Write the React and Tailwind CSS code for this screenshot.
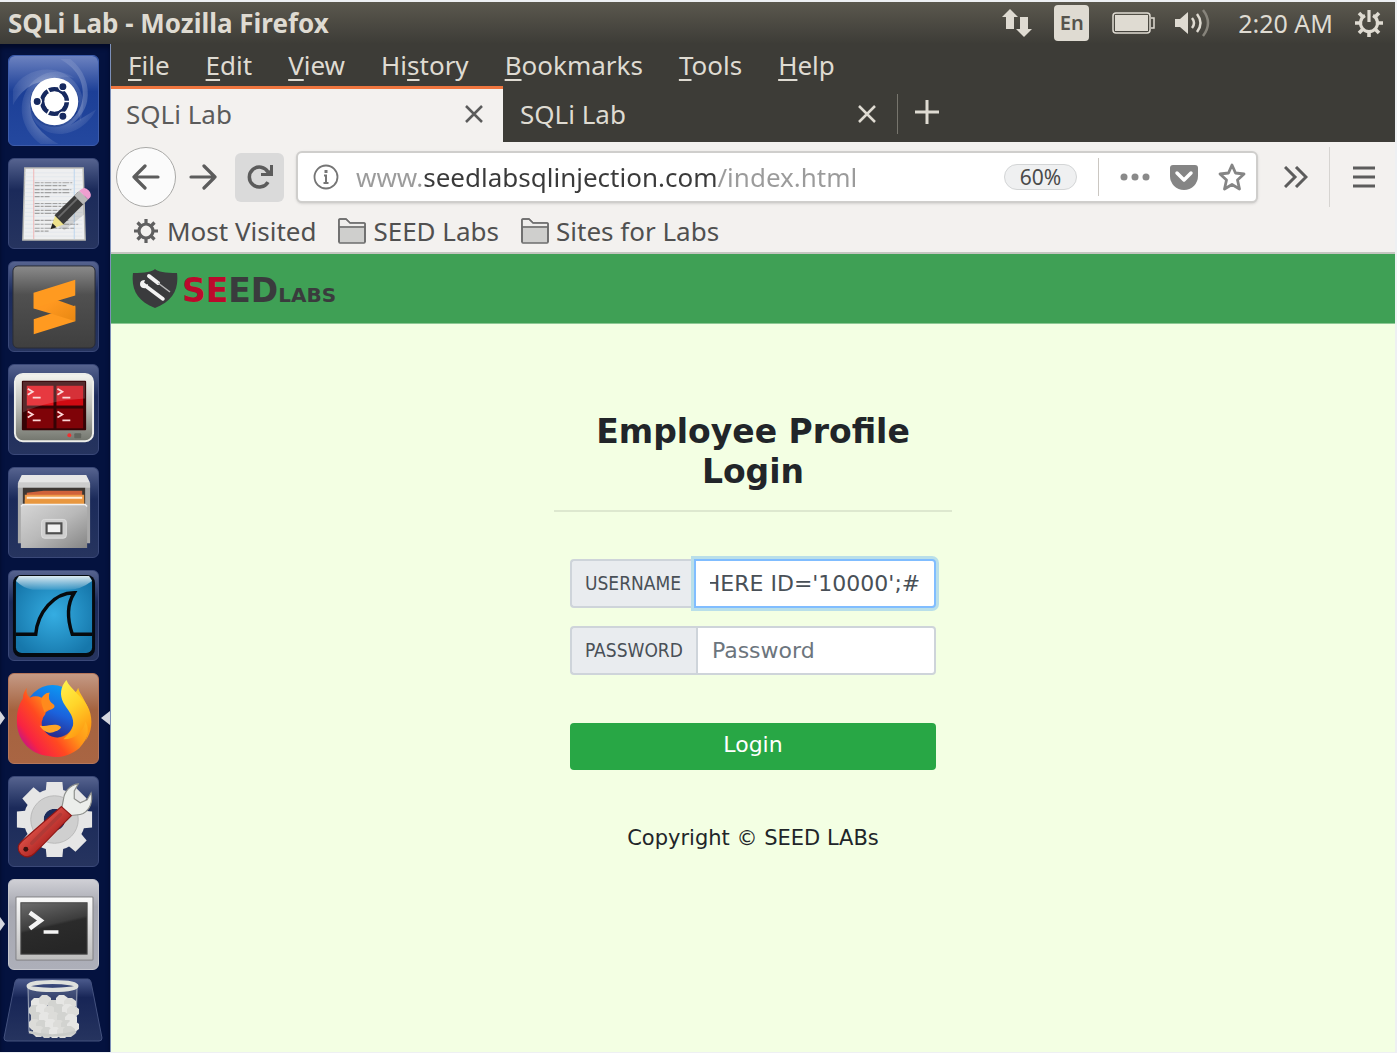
import { useEffect, useRef } from "react";

/* ---------- Launcher icons ---------- */

function UbuntuIcon() {
  return (
    <svg viewBox="0 0 90 90" className="size-full">
      <defs>
        <linearGradient id="dash" x1="0" y1="0" x2="0" y2="1">
          <stop offset="0" stopColor="#6c82c0" />
          <stop offset="0.4" stopColor="#1c3f97" />
          <stop offset="1" stopColor="#24489f" />
        </linearGradient>
        <radialGradient id="swirl">
          <stop offset="0" stopColor="#fff" stopOpacity="0.5" />
          <stop offset="1" stopColor="#fff" stopOpacity="0.08" />
        </radialGradient>
      </defs>
      <rect width="90" height="90" rx="6" fill="url(#dash)" />
      <path d="M4 34C12 16 38 8 56 18C72 27 80 44 72 66C68 44 54 26 36 26C22 26 10 38 4 50Z" fill="url(#swirl)" />
      <path d="M32 89C14 76 8 54 17 36C24 20 46 8 66 22C44 18 24 32 22 50C20 66 34 80 50 89Z" fill="url(#swirl)" />
      <path d="M88 54C78 74 56 84 38 76C26 70 18 58 22 42C24 60 42 72 58 66C74 60 78 40 72 24C68 14 60 8 52 3H62C76 14 82 30 79 46C77 56 70 64 62 70Z" fill="url(#swirl)" />
      <circle cx="46" cy="47" r="25" fill="#0b2a75" opacity="0.35" />
      <circle cx="46" cy="46" r="24" fill="#fff" />
      <circle cx="46" cy="46" r="12.5" fill="none" stroke="#16295f" strokeWidth="4.5" />
      <g stroke="#fff" strokeWidth="1.6">
        <path d="M46 46H64M46 46L37 30M46 46L37 62" />
      </g>
      <circle cx="46" cy="46" r="9.8" fill="#fff" />
      <g fill="#16295f" stroke="#fff" strokeWidth="1.4">
        <circle cx="28.500" cy="46" r="4.200" />
        <circle cx="54.500" cy="31" r="4.200" />
        <circle cx="54.500" cy="61" r="4.200" />
      </g>
    </svg>
  );
}

function EditorIcon() {
  return (
    <svg viewBox="0 0 90 90" className="size-full">
      <path d="M16 9H75L77 82H14Z" fill="#eeeff0" stroke="#b9b9b4" strokeWidth="1.5" />
      <g stroke="#dde3ea" strokeWidth="0.7">
        <path d="M16 14H74M16 18H74M16 22H74M16 26H74M16 30H74M16 34H74M16 38H74M16 42H74M16 46H74M16 50H74M16 54H74M16 58H74M16 62H74M16 66H74M16 70H74M16 74H74M16 78H74" />
      </g>
      <path d="M25 10V81" stroke="#f0b6b6" strokeWidth="1" />
      <path d="M66 10V81" stroke="#bcd6ee" strokeWidth="1" />
      <g stroke="#a2a2a2" strokeWidth="1.2" strokeDasharray="5 1 3 1 7 1">
        <path d="M26 24H64M26 27H58M26 31H63M26 34H62M26 38H41M26 45H62M26 48H63M26 52H60M26 55H60M26 62H60M26 66H70M26 70H66M26 73H40" />
      </g>
      <path d="M50 68L76 44L76 56L56 72Z" fill="#000" opacity="0.12" />
      <path d="M42 71L47 56L56 66Z" fill="#eee28b" />
      <path d="M42 71L44 65L48 69Z" fill="#222" />
      <path d="M46 57L70 33L79 42L55 66Z" fill="#3b3b3b" />
      <path d="M50 59L73 36" stroke="#6a6a6a" strokeWidth="2" />
      <path d="M66 37L71 32L80 41L75 46Z" fill="#b9b9b9" />
      <path d="M71 32L74 30Q77 28 81 32Q84 36 82 39L80 41Z" fill="#ee9fd0" />
    </svg>
  );
}

function SublimeIcon() {
  return (
    <svg viewBox="0 0 90 90" className="size-full">
      <defs>
        <linearGradient id="subl" x1="0" y1="0" x2="0" y2="1">
          <stop offset="0" stopColor="#8b8b8b" />
          <stop offset="0.35" stopColor="#505050" />
          <stop offset="1" stopColor="#3f3f3f" />
        </linearGradient>
        <linearGradient id="sublBand" x1="0" y1="0" x2="1" y2="1">
          <stop offset="0.4" stopColor="#ff9820" />
          <stop offset="1" stopColor="#e88812" />
        </linearGradient>
      </defs>
      <rect x="4" y="4" width="83" height="83" rx="5" fill="url(#subl)" stroke="#2a2d36" />
      <path d="M25 58L67 44V60L25 73Z" fill="#ff9a20" />
      <path d="M25 31L50 39L67 45V60L42 52L25 47Z" fill="url(#sublBand)" />
      <path d="M25 31L67 18V34L50 39L25 47Z" fill="#ff9a20" />
    </svg>
  );
}

function TerminatorIcon() {
  const panes = [
    [18, 21, "#e3141c"],
    [48, 21, "#cf0a12"],
    [18, 44, "#7f0308"],
    [48, 44, "#7f0308"],
  ];
  return (
    <svg viewBox="0 0 90 90" className="size-full">
      <defs>
        <linearGradient id="crt" x1="0" y1="0" x2="0" y2="1">
          <stop offset="0" stopColor="#f3f4f0" />
          <stop offset="0.5" stopColor="#b9bbb5" />
          <stop offset="1" stopColor="#73766e" />
        </linearGradient>
      </defs>
      <rect x="6" y="9" width="79" height="68" rx="8" fill="url(#crt)" stroke="#ecede9" strokeWidth="2" />
      <rect x="13" y="16" width="65" height="50" rx="1" fill="#360305" />
      {panes.map(([x, y, c]) => (
        <g key={`${x}-${y}`}>
          <rect x={x} y={y} width="27" height="20" fill={c} />
          <path d={`M${x + 1} ${y + 3}l5 3l-5 3M${x + 6} ${y + 12}h8`} fill="none" stroke="#fbd5d5" strokeWidth="1.8" />
        </g>
      ))}
      <path d="M14 17H77V34Q40 36 14 48Z" fill="#fff" opacity="0.16" />
      <circle cx="61" cy="71" r="2" fill="#f03030" />
      <rect x="66" y="69" width="7" height="5" rx="1" fill="#62655e" />
    </svg>
  );
}

function FilesIcon() {
  return (
    <svg viewBox="0 0 90 90" className="size-full">
      <defs>
        <linearGradient id="cab" x1="0" y1="0" x2="1" y2="1">
          <stop offset="0" stopColor="#d6d6d6" />
          <stop offset="0.5" stopColor="#b9b9b9" />
          <stop offset="1" stopColor="#858585" />
        </linearGradient>
      </defs>
      <path d="M13 7H78L82 18V76H9V18Z" fill="#a9a9a9" />
      <path d="M13 7H78L82 15H9Z" fill="#e6e6e6" />
      <path d="M9 15H82V20H9Z" fill="#cdcdcd" />
      <rect x="14" y="20" width="63" height="18" fill="#3d3733" />
      <path d="M18 25L35 23H74V37H18Z" fill="#d0623a" />
      <path d="M16 27H76V37H16Z" fill="#f09a48" />
      <path d="M18 30H74" stroke="#fff0dc" strokeWidth="2" />
      <path d="M16 32H76V38H16Z" fill="#e8973f" />
      <path d="M14 37H77L79 40V81H12V40Z" fill="url(#cab)" />
      <path d="M12 39L14 37H77L79 39" fill="none" stroke="#f1f1f1" strokeWidth="1.5" />
      <rect x="33" y="52" width="25" height="19" rx="3" fill="#cfcfcf" stroke="#dedede" />
      <rect x="38" y="56" width="15" height="10" fill="#f2f2f2" stroke="#4f4f4f" strokeWidth="2.2" />
    </svg>
  );
}

function WiresharkIcon() {
  return (
    <svg viewBox="0 0 90 90" className="size-full">
      <defs>
        <radialGradient id="sea" cx="0.5" cy="0.5" r="0.6">
          <stop offset="0" stopColor="#35ade2" />
          <stop offset="1" stopColor="#1677ab" />
        </radialGradient>
        <linearGradient id="seaGlare" x1="0" y1="0" x2="0" y2="1">
          <stop offset="0" stopColor="#fff" stopOpacity="0.85" />
          <stop offset="1" stopColor="#fff" stopOpacity="0.1" />
        </linearGradient>
      </defs>
      <rect x="4" y="4" width="83" height="83" rx="8" fill="#050a10" />
      <rect x="7" y="5" width="77" height="78" rx="6" fill="url(#sea)" />
      <path d="M10 5H81L84 10Q72 19 60 19H24Q14 17 7 10Z" fill="url(#seaGlare)" />
      <path d="M7 64H27C29 42 45 22 66 22C57 36 60 52 64 64H84" fill="none" stroke="#06090c" strokeWidth="3.5" />
    </svg>
  );
}

function FirefoxIcon() {
  return (
    <svg viewBox="0 0 90 90" className="size-full">
      <defs>
        <linearGradient id="foxGlobe" x1="0.7" y1="0" x2="0.3" y2="1">
          <stop offset="0" stopColor="#0a9cf5" />
          <stop offset="0.5" stopColor="#1b62dc" />
          <stop offset="1" stopColor="#2c1c79" />
        </linearGradient>
        <linearGradient id="foxBody" x1="0.9" y1="0.2" x2="0.05" y2="0.8">
          <stop offset="0" stopColor="#ffc420" />
          <stop offset="0.35" stopColor="#ff9518" />
          <stop offset="0.6" stopColor="#ff4a20" />
          <stop offset="0.85" stopColor="#f82343" />
          <stop offset="1" stopColor="#c0168a" />
        </linearGradient>
        <linearGradient id="foxTail" x1="0" y1="0" x2="0.4" y2="1">
          <stop offset="0" stopColor="#fff44f" />
          <stop offset="0.5" stopColor="#ffd52a" />
          <stop offset="1" stopColor="#ff9a12" />
        </linearGradient>
      </defs>
      <circle cx="44" cy="38" r="27" fill="url(#foxGlobe)" />
      <path
        d="M18 14C17 19 19 22 21 24C25 22 29 22 33 24C35 21 38 19 41 19C40 22 40 24 41 27C43 30 46 30 46 33C45 36 39 36 37 39C37 42 34 43 34 46C32 49 33 55 38 60C44 66 56 66 61 59C67 52 67 42 62 34C58 28 54 26 54 16C58 22 66 24 70 14C71 20 77 25 81 38C84 53 80 66 71 75C62 82 51 86 40 83C20 81 7 65 8 46C8 36 11 29 14 25C14 20 16 17 18 14Z"
        fill="url(#foxBody)"
      />
      <path
        d="M58 6C52 13 51 21 55 29C59 36 65 41 65 50C65 57 60 61 55 66C68 66 76 57 77 48C81 54 80 61 77 68C84 59 85 47 81 36C78 28 72 24 68 19C64 14 60 11 58 6Z"
        fill="url(#foxTail)"
      />
      <path d="M31 52C39 54 45 49 52 53C54 54 50 57 47 58C42 61 35 59 31 52Z" fill="#ffa526" />
      <path d="M34 24C36 21 38 19 41 19C39 23 40 28 46 32C43 36 38 35 36 39C34 33 31 27 34 24Z" fill="#ff8a1c" />
    </svg>
  );
}

function SettingsIcon() {
  const teeth = [0, 45, 90, 135, 180, 225, 270, 315];
  return (
    <svg viewBox="0 0 90 90" className="size-full">
      <defs>
        <linearGradient id="redGrip" x1="0" y1="0" x2="1" y2="1">
          <stop offset="0.3" stopColor="#e2564d" />
          <stop offset="0.7" stopColor="#a81f1d" />
        </linearGradient>
      </defs>
      <g fill="#e6e6e6">
        {teeth.map((a) => (
          <path key={a} d="M37 16L38 5H54L55 16Z" transform={`rotate(${a} 46 43)`} />
        ))}
      </g>
      <circle cx="46" cy="43" r="21" fill="none" stroke="#e6e6e6" strokeWidth="20" />
      <circle cx="46" cy="43" r="17.500" fill="none" stroke="#cfcfcf" strokeWidth="13" />
      <circle cx="46" cy="43" r="24" fill="none" stroke="#b9b9b9" strokeWidth="1" />
      <path d="M53 33L55 23C56 14 62 8 70 7L66 14V22L72 26L79 23L83 16C85 25 82 33 75 37C71 39 67 38 63 39L59 43Z" fill="#eceeeb" stroke="#8f918d" strokeWidth="1.2" />
      <path d="M53 30L63 39L26 77Q19 84 12 78Q6 71 13 65Z" fill="url(#redGrip)" stroke="#8f1715" strokeWidth="1.2" />
      <path d="M52 38L23 67" stroke="#b03a36" strokeWidth="3.5" strokeLinecap="round" />
      <circle cx="17" cy="73" r="2.500" fill="#3c1210" />
    </svg>
  );
}

function TerminalIcon() {
  return (
    <svg viewBox="0 0 90 90" className="size-full">
      <defs>
        <linearGradient id="scr" x1="0" y1="0" x2="0.3" y2="1">
          <stop offset="0" stopColor="#6c6c6c" />
          <stop offset="0.5" stopColor="#3d3d3d" />
          <stop offset="0.55" stopColor="#2b2b2b" />
          <stop offset="1" stopColor="#262626" />
        </linearGradient>
        <linearGradient id="bez" x1="0" y1="0" x2="0" y2="1">
          <stop offset="0" stopColor="#fafafa" />
          <stop offset="1" stopColor="#bdbdbd" />
        </linearGradient>
      </defs>
      <rect x="7" y="17" width="78" height="64" rx="1" fill="url(#bez)" stroke="#8c8c90" strokeWidth="1.3" />
      <rect x="12" y="23" width="67" height="52" fill="url(#scr)" stroke="#4a4a4a" />
      <path d="M21 33L32 41L21 49" fill="none" stroke="#f4f4f4" strokeWidth="4.5" />
      <path d="M35 52.500H50" stroke="#f4f4f4" strokeWidth="3.500" />
    </svg>
  );
}

function TrashIcon() {
  const balls = [
    [33, 25], [41, 22], [50, 27], [58, 22], [66, 25], [31, 32], [38, 31], [46, 33], [56, 31], [64, 31], [69, 33],
    [33, 39], [41, 39], [50, 39], [59, 39], [67, 41], [31, 46], [38, 47], [47, 46], [55, 47], [63, 47], [69, 48],
    [35, 53], [43, 54], [51, 54], [59, 54], [65, 53],
  ];
  return (
    <svg viewBox="0 0 100 64" className="block w-[100px]">
      <defs>
        <linearGradient id="glass" x1="0" y1="0" x2="0" y2="1">
          <stop offset="0" stopColor="#4b5a8c" />
          <stop offset="0.3" stopColor="#172556" />
          <stop offset="1" stopColor="#26345f" />
        </linearGradient>
      </defs>
      <path d="M15 1H85Q87 1 88 4L99 60Q99 63 96 63H4Q1 63 1 60L12 4Q13 1 15 1Z" fill="url(#glass)" stroke="#44527f" />
      <path d="M25 9L26 54Q50 61 73 54L74 9" fill="#8791a8" fillOpacity="0.3" stroke="#9da6ba" strokeWidth="1" />
      {balls.map(([x, y], i) => (
        <path
          key={i}
          d={`M${x - 5} ${y - 2}l3 -3l5 0l4 3l0 5l-4 3l-5 0l-3 -3z`}
          fill={i % 3 === 0 ? "#e6e6e4" : i % 3 === 1 ? "#dcdcd9" : "#d2d3d0"}
        />
      ))}
      <ellipse cx="49.500" cy="8" rx="24" ry="4" fill="none" stroke="#dfe1dd" strokeWidth="4" />
      <path d="M26 54Q49 61 73 54" fill="none" stroke="#c9cbc8" strokeWidth="2.5" />
    </svg>
  );
}

const glassTile = "bg-linear-to-b from-[#56638f] via-[#1b2a5a] via-35% to-[#26345f] border-[#3a4878]";

const launcher = [
  { label: "Dash", Icon: UbuntuIcon, tile: "bg-[#24489f] border-[#3d5cab]" },
  { label: "Text Editor", Icon: EditorIcon, tile: glassTile },
  { label: "Sublime Text", Icon: SublimeIcon, tile: glassTile },
  { label: "Terminator", Icon: TerminatorIcon, tile: glassTile },
  { label: "Files", Icon: FilesIcon, tile: glassTile },
  { label: "Wireshark", Icon: WiresharkIcon, tile: glassTile },
  {
    label: "Firefox",
    Icon: FirefoxIcon,
    running: true,
    active: true,
    tile: "bg-linear-to-b from-[#c49a85] via-[#a5633f] via-40% to-[#a96543] border-[#b5765a]",
  },
  { label: "System Settings", Icon: SettingsIcon, tile: glassTile },
  {
    label: "Terminal",
    Icon: TerminalIcon,
    running: true,
    tile: "bg-linear-to-b from-[#cfcfd5] via-[#a6a7b0] via-30% to-[#adafb9] border-[#c5c6cd]",
  },
];

function Launcher() {
  return (
    <nav
      aria-label="Launcher"
      className="flex w-[111px] shrink-0 flex-col items-center gap-3 border-r border-[#7c8fb8] bg-[#04123f] pt-[11px] shadow-[inset_0_4px_4px_#020a28]"
    >
      {launcher.map(({ label, Icon, tile, running, active }) => (
        <div key={label} className="relative flex w-full justify-center pr-1">
          {running && (
            <span className="absolute top-[38px] left-0 border-y-[7px] border-l-[5px] border-y-transparent border-l-[#d5d7df]" />
          )}
          <button aria-label={label} className={`size-[91px] overflow-hidden rounded-md border ${tile}`}>
            <Icon />
          </button>
          {active && (
            <span className="absolute top-[38px] right-0 border-y-[7px] border-r-[9px] border-y-transparent border-r-[#d5d7df]" />
          )}
        </div>
      ))}
      <button aria-label="Trash" className="-mt-1 pr-1">
        <TrashIcon />
      </button>
    </nav>
  );
}

/* ---------- System panel ---------- */

function TopPanel() {
  return (
    <header className="flex h-[42px] items-center bg-linear-to-b from-[#5b584e] to-[#3d3c37] pr-3 pl-2 text-[#dfdbd2]">
      <h1 className="flex-1 text-[26px] leading-none font-bold">SQLi Lab - Mozilla Firefox</h1>
      <div className="flex items-center">
        <svg viewBox="0 0 30 30" className="mr-[22px] size-[30px]" fill="#dfdbd2" aria-label="Network">
          <path d="M8 1L16 9H12V21H4V9H0ZM18 9H26V21H30L22 29L14 21H18Z" />
        </svg>
        <span className="mr-[23px] flex h-[36px] w-[35px] items-center justify-center rounded-sm bg-[#dfdbd2] text-[20px] font-semibold text-[#55534c]">
          En
        </span>
        <svg viewBox="0 0 43 22" className="mr-[20px] h-[22px] w-[43px]" aria-label="Battery">
          <rect x="1" y="1" width="37" height="20" rx="3" fill="none" stroke="#dfdbd2" strokeWidth="1.500" />
          <rect x="3" y="3" width="33" height="16" fill="#dfdbd2" />
          <path d="M39 6H42V16H39" fill="none" stroke="#dfdbd2" strokeWidth="1.500" />
        </svg>
        <svg viewBox="0 0 35 30" className="mr-[28px] h-[30px] w-[35px]" fill="none" strokeWidth="2.500" aria-label="Volume">
          <path d="M0 11H5L13 4V26L5 19H0Z" fill="#dfdbd2" />
          <path d="M17 10Q21 15 17 20" stroke="#dfdbd2" />
          <path d="M22 6Q29 15 22 24" stroke="#dfdbd2" />
          <path d="M28 2Q38 15 28 28" stroke="#87847b" />
        </svg>
        <time className="mr-[22px] text-[25px] leading-none">2:20 AM</time>
        <svg viewBox="0 0 28 28" className="size-[28px]" fill="none" stroke="#dfdbd2" aria-label="Session">
          <path d="M10 6.500A8.500 8.500 0 1 0 18 6.500" strokeWidth="3.200" />
          <path d="M14 1V13" strokeWidth="3.200" />
          <path d="M0 14H5M23 14H28M14 23V28M4 4L8 8M24 4L20 8M4 24L8 20M24 24L20 20" strokeWidth="3.600" />
        </svg>
      </div>
    </header>
  );
}

/* ---------- Browser chrome ---------- */

const menus = [
  ["", "F", "ile"],
  ["", "E", "dit"],
  ["", "V", "iew"],
  ["Hi", "s", "tory"],
  ["", "B", "ookmarks"],
  ["", "T", "ools"],
  ["", "H", "elp"],
];

function MenuBar() {
  return (
    <div role="menubar" className="flex h-[42px] items-center gap-9 pb-px pl-[17px] text-[26px] leading-none text-[#dfdbd2]">
      {menus.map(([pre, key, post]) => (
        <button key={key + post} role="menuitem">
          {pre}
          <span className="underline decoration-2 underline-offset-4">{key}</span>
          {post}
        </button>
      ))}
    </div>
  );
}

function Close() {
  return (
    <svg viewBox="0 0 18 18" className="size-[18px]" stroke="currentColor" strokeWidth="2.500" fill="none">
      <path d="M1 1L17 17M17 1L1 17" />
    </svg>
  );
}

function Tabs() {
  return (
    <div className="flex h-[56px] items-stretch text-[26px] leading-none">
      <div className="flex w-[392px] items-center justify-between border-t-[3px] border-[#f0763f] bg-[#f3f1ef] pr-5 pb-1 pl-[15px] text-[#5b5b5b]">
        <button>SQLi Lab</button>
        <button aria-label="Close tab">
          <Close />
        </button>
      </div>
      <div className="flex w-[394px] items-center justify-between border-t-[3px] border-transparent pr-[21px] pb-1 pl-[17px] text-[#dfdbd2]">
        <button>SQLi Lab</button>
        <button aria-label="Close tab">
          <Close />
        </button>
      </div>
      <div className="my-2 border-l border-[#77756d]" />
      <button aria-label="New tab" className="pb-1 pl-4 text-[#dfdbd2]">
        <svg viewBox="0 0 26 26" className="size-[26px]" stroke="currentColor" strokeWidth="3" fill="none">
          <path d="M13 1V25M1 13H25" />
        </svg>
      </button>
    </div>
  );
}

function Toolbar() {
  return (
    <div className="flex h-[68px] items-center bg-[#f3f1ef] pt-[2px] pr-5 pl-[5px] text-[#5c5c5c]">
      <button
        aria-label="Back"
        className="flex size-[60px] shrink-0 items-center justify-center rounded-full border border-[#a9a9a7] bg-[#fbfbfb]"
      >
        <svg viewBox="0 0 28 28" className="size-[28px]" fill="none" stroke="currentColor" strokeWidth="3.200" strokeLinecap="round" strokeLinejoin="round">
          <path d="M26 14H2M13 3L2 14L13 25" />
        </svg>
      </button>
      <button aria-label="Forward" className="ml-[13px]">
        <svg viewBox="0 0 28 28" className="size-[28px]" fill="none" stroke="currentColor" strokeWidth="3.200" strokeLinecap="round" strokeLinejoin="round">
          <path d="M2 14H26M15 3L26 14L15 25" />
        </svg>
      </button>
      <button aria-label="Reload" className="ml-[18px] flex size-[49px] shrink-0 items-center justify-center rounded-md bg-[#dadada]">
        <svg viewBox="0 0 28 28" className="size-[28px]" fill="none" stroke="currentColor" strokeWidth="3.500">
          <path d="M22 19A10 10 0 1 1 22 9" />
          <path d="M24 2H27V13H15V10H20L24 7Z" fill="currentColor" stroke="none" />
        </svg>
      </button>
      <div className="ml-3 flex h-[52px] flex-1 items-center rounded-md border-2 border-[#cfcecc] bg-white pr-2 pl-[15px] shadow-sm">
        <svg viewBox="0 0 26 26" className="size-[26px] shrink-0" fill="none" stroke="#757575" strokeWidth="1.800" aria-label="Site information">
          <circle cx="13" cy="13" r="11.500" />
          <path d="M11 11.500H13V18M10.500 19H15.500" strokeWidth="2" />
          <path d="M13 6V9" strokeWidth="3" />
        </svg>
        <input
          aria-label="Address"
          type="text"
          defaultValue="www.seedlabsqlinjection.com/index.html"
          className="ml-[17px] h-10 min-w-0 flex-1 bg-[linear-gradient(90deg,#9b9b9b_67px,#3a3a3a_67px,#3a3a3a_361px,#9b9b9b_361px)] bg-clip-text text-[26px] leading-none text-transparent outline-none"
        />
        <button className="mr-[21px] h-[26px] w-[73px] rounded-full border border-[#d3d5d6] bg-[#eff0f1] text-[21px] leading-none text-[#4a4a4a]">
          60%
        </button>
        <div className="mr-[21px] h-[38px] border-l border-[#cbc7c2]" />
        <button aria-label="Page actions" className="mr-5">
          <svg viewBox="0 0 30 8" className="h-2 w-[30px]" fill="#8a8a8a">
            <circle cx="4" cy="4" r="3.500" />
            <circle cx="15" cy="4" r="3.500" />
            <circle cx="26" cy="4" r="3.500" />
          </svg>
        </button>
        <button aria-label="Save to Pocket" className="mr-5">
          <svg viewBox="0 0 28 25" className="h-[25px] w-[28px]">
            <path d="M3 0H25Q28 0 28 3V11A14 14 0 0 1 0 11V3Q0 0 3 0Z" fill="#858585" />
            <path d="M7 8L14 15L21 8" fill="none" stroke="#fff" strokeWidth="3.500" strokeLinecap="round" strokeLinejoin="round" />
          </svg>
        </button>
        <button aria-label="Bookmark this page" className="mr-[2px]">
          <svg viewBox="0 0 28 28" className="size-[28px]" fill="none" stroke="#858585" strokeWidth="2.800" strokeLinejoin="round">
            <path d="M14 2L17.500 10L26 11L19.500 17L21.500 26L14 21.500L6.500 26L8.500 17L2 11L10.500 10Z" />
          </svg>
        </button>
      </div>
      <button aria-label="More tools" className="ml-[26px]">
        <svg viewBox="0 0 24 22" className="h-[22px] w-[24px]" fill="none" stroke="currentColor" strokeWidth="3">
          <path d="M1 1L11 11L1 21M12 1L22 11L12 21" />
        </svg>
      </button>
      <div className="ml-[21px] h-[60px] border-l border-[#d6d4d1]" />
      <button aria-label="Open menu" className="ml-[23px]">
        <svg viewBox="0 0 22 22" className="size-[22px]" stroke="currentColor" strokeWidth="3">
          <path d="M0 2H22M0 11H22M0 20H22" />
        </svg>
      </button>
    </div>
  );
}

function Folder() {
  return (
    <svg viewBox="0 0 28 26" className="h-[26px] w-[28px]" stroke="#6d6d6d" strokeWidth="1.600" strokeLinejoin="round">
      <path d="M1 24V2Q1 1 2 1H8L12 5H26Q27 5 27 6V24Q27 25 26 25H2Q1 25 1 24Z" fill="#cfcfcd" />
      <path d="M1.500 2H8L12 5.500H26.500V8H1.500Z" fill="#efeeec" stroke="none" />
      <path d="M1 9H27" fill="none" />
      <path d="M1 24V2Q1 1 2 1H8L12 5H26Q27 5 27 6V24" fill="none" />
    </svg>
  );
}

function BookmarksBar() {
  return (
    <div className="flex h-[44px] items-center gap-[22px] border-b-2 border-[#c4c6c0] bg-[#f3f1ef] pl-[22px] text-[26px] leading-none text-[#505050]">
      <button className="flex items-center gap-2">
        <svg viewBox="0 0 26 26" className="size-[26px]" fill="none" stroke="#5f5f5f" strokeWidth="3.200">
          <circle cx="13" cy="13" r="7" />
          <path d="M13 1V6M13 20V25M1 13H6M20 13H25M4.500 4.500L8 8M21.500 4.500L18 8M4.500 21.500L8 18M21.500 21.500L18 18" />
        </svg>
        Most Visited
      </button>
      <button className="flex items-center gap-[7px]">
        <Folder />
        SEED Labs
      </button>
      <button className="flex items-center gap-[7px]">
        <Folder />
        Sites for Labs
      </button>
    </div>
  );
}

/* ---------- Web page ---------- */

function SeedLogo() {
  return (
    <a href="#home" className="flex items-center gap-1">
      <svg viewBox="0 0 46 39" className="h-[39px] w-[46px]">
        <path d="M23 0Q27 4 45 4C47 20 41 32 23 39C5 32 -1 20 1 4Q19 4 23 0Z" fill="#3a3b3d" />
        <path d="M11 15L31 30" stroke="#f3f3f3" strokeWidth="3.500" strokeLinecap="round" />
        <path d="M8 15Q8 11 13 11L12 14L14 16L16 15Q16 20 11 19Q8 18 8 15Z" fill="#f3f3f3" />
        <path d="M17 7L26 14" stroke="#f3f3f3" strokeWidth="4" strokeLinecap="round" />
        <path d="M26 14L38 23" stroke="#b9b9b9" strokeWidth="1.500" />
      </svg>
      <span className="flex items-baseline pt-1 font-['DejaVu_Sans',sans-serif] leading-none font-bold text-[#3a3b3d]">
        <span className="text-[33px]">
          <span className="text-[#bb0a2c]">SE</span>ED
        </span>
        <span className="text-[20px]">LABS</span>
      </span>
    </a>
  );
}

const addon =
  "flex items-center rounded-l-sm border-2 border-r-0 border-[#ced4da] bg-[#e9ecef] px-[13px] font-['DejaVu_Sans_Condensed','DejaVu_Sans',sans-serif] text-[19px] text-[#495057]";

function LoginPage() {
  const username = useRef(null);

  useEffect(() => {
    username.current.scrollLeft = username.current.scrollWidth;
  }, []);

  return (
    <div className="flex flex-1 flex-col bg-[#f3ffe3] font-['DejaVu_Sans',sans-serif] text-[#212529]">
      <div className="flex h-[70px] items-center border-b border-[#8cc894] bg-[#3fa055] pl-[21px]">
        <SeedLogo />
      </div>
      <main className="mx-auto flex w-[398px] flex-col pt-[88px]">
        <h2 className="border-b-2 border-[#dde8cf] pb-[18px] text-center text-[33px] leading-[40px] font-bold">
          Employee Profile Login
        </h2>
        <form className="flex flex-col px-4 pt-[47px]" onSubmit={(e) => e.preventDefault()}>
          <div className="flex h-[49px]">
            <label htmlFor="username" className={addon}>
              USERNAME
            </label>
            <input
              id="username"
              ref={username}
              type="text"
              defaultValue="WHERE ID='10000';#"
              className="min-w-0 flex-1 rounded-r-sm border-2 border-[#80bdff] bg-white px-[14px] text-[22px] text-[#495057] ring-3 ring-[#b9dfe9] outline-none"
            />
          </div>
          <div className="mt-[18px] flex h-[49px]">
            <label htmlFor="password" className={addon}>
              PASSWORD
            </label>
            <input
              id="password"
              type="password"
              placeholder="Password"
              className="min-w-0 flex-1 rounded-r-sm border-2 border-[#ced4da] bg-white px-[14px] text-[22px] text-[#495057] outline-none placeholder:text-[#6c757d]"
            />
          </div>
          <button type="submit" className="mt-[48px] h-[47px] rounded-sm bg-[#28a745] pb-1 text-[22px] leading-none text-white">
            Login
          </button>
        </form>
        <p className="pt-[52px] text-center text-[21px] leading-[32px]">Copyright © SEED LABs</p>
      </main>
    </div>
  );
}

export default function App() {
  return (
    <div className="flex min-h-screen flex-col border-t-2 border-r-2 border-b border-[#eef0f3] bg-[#3d3c37] font-['Noto_Sans','Open_Sans',sans-serif]">
      <TopPanel />
      <div className="flex flex-1">
        <Launcher />
        <div className="flex min-w-0 flex-1 flex-col">
          <MenuBar />
          <Tabs />
          <Toolbar />
          <BookmarksBar />
          <LoginPage />
        </div>
      </div>
    </div>
  );
}
